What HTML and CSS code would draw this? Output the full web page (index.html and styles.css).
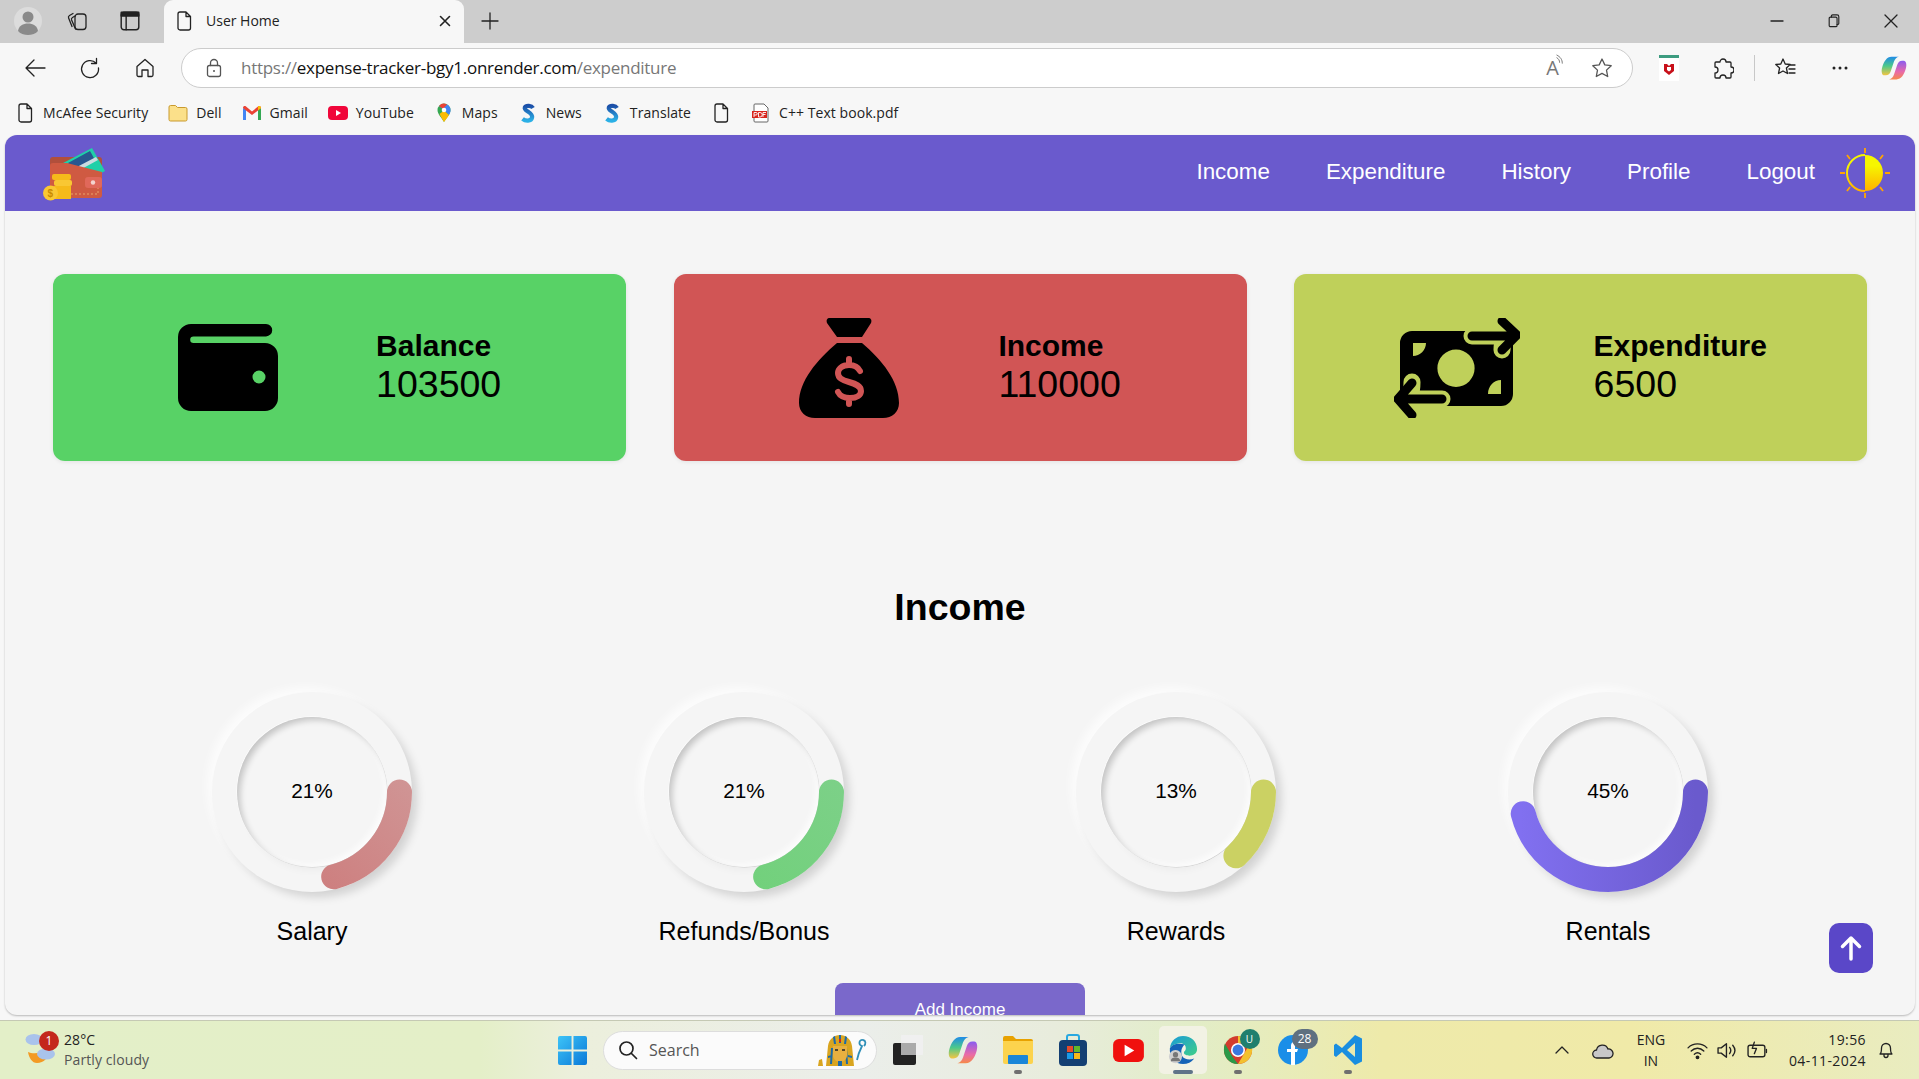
FILE: index.html
```html
<!DOCTYPE html>
<html lang="en">
<head>
<meta charset="utf-8">
<title>User Home</title>
<link rel="stylesheet" href="styles.css">
</head>
<body>
<svg class="defs" width="0" height="0" aria-hidden="true">
  <defs>
    <linearGradient id="cop1" x1="0" y1="0" x2="0" y2="1"><stop offset="0" stop-color="#1f8ae8"/><stop offset=".5" stop-color="#4cc98a"/><stop offset="1" stop-color="#f5c542"/></linearGradient>
    <linearGradient id="cop2" x1="0" y1="0" x2="0" y2="1"><stop offset="0" stop-color="#8a5cf0"/><stop offset=".6" stop-color="#e96aa8"/><stop offset="1" stop-color="#f58a4a"/></linearGradient>
    <linearGradient id="sgrad" x1="0" y1="0" x2="0" y2="1"><stop offset="0" stop-color="#1c4fa8"/><stop offset="1" stop-color="#2bb0e6"/></linearGradient>
    <symbol id="copilot" viewBox="0 0 32 32">
      <path d="M13 2h9c-3 .5-5 3-6 6l-4 12c-1 3-3 5-6 5H4C1 25 0 20 1.500 15 3.500 8 7 2 13 2z" fill="url(#cop1)"/>
      <path d="M19 30h-9c3-.5 5-3 6-6l4-12c1-3 3-5 6-5h2c3 0 4 5 2.500 10-2 7-5.500 13-11.500 13z" fill="url(#cop2)"/>
    </symbol>
    <symbol id="doc" viewBox="0 0 16 20">
      <path d="M2 3a2 2 0 0 1 2-2h6l4.500 4.500V17a2 2 0 0 1-2 2H4a2 2 0 0 1-2-2zM10 1v4.500h4.500"/>
    </symbol>
    <symbol id="bing" viewBox="0 0 16 22">
      <path d="M13.500 5.500C12 3 6 2 4.500 5c-1.500 4 9 5 8 11-1 4.500-7.500 4-10.500 1.500" fill="none" stroke="url(#sgrad)" stroke-width="4.600"/>
    </symbol>
  </defs>
</svg>
<div class="window">
  <header class="tabstrip">
    <div class="strip-left">
      <svg class="avatar" viewBox="0 0 28 28" width="28" height="28"><circle cx="14" cy="14" r="14" fill="#dcdcdc"/><circle cx="14" cy="10" r="5.500" fill="#8a8a8a"/><path d="M4 24c1-5.500 5-7.500 10-7.500s9 2 10 7.500c-2 2.500-6 4-10 4s-8-1.500-10-4z" fill="#8a8a8a"/></svg>
      <svg class="ico strip-ico" viewBox="0 0 22 22"><rect x="9" y="4" width="11" height="15.500" rx="3"/><path d="M9 6 6.500 7.500c-1 .6-1.300 1.600-.9 2.600L9.500 19M7 3.500 3.500 5.500c-1 .6-1.300 1.600-.9 2.600L6 16.500"/></svg>
      <svg class="ico strip-ico strip-ico-layout" viewBox="0 0 20 20"><rect x="2" y="2" width="16" height="16" rx="2.500"/><path d="M6.500 5.500V18"/><rect x="2" y="2" width="16" height="3.500" fill="#222"/></svg>
    </div>
    <div class="tab">
      <svg class="ico tab-doc"><use href="#doc"/></svg>
      <span class="tab-title">User Home</span>
      <svg class="ico tab-close" viewBox="0 0 12 12"><path d="M1.500 1.500l9 9M10.500 1.500l-9 9"/></svg>
    </div>
    <svg class="ico new-tab" viewBox="0 0 18 18"><path d="M9 1v16M1 9h16"/></svg>
    <div class="window-controls">
      <svg class="ico win-ico" viewBox="0 0 14 14"><path d="M1 7h12"/></svg>
      <svg class="ico win-ico" viewBox="0 0 14 16"><rect x="1.500" y="3.500" width="9" height="11" rx="1.500"/><path d="M4 3.500V2.500A1.500 1.500 0 0 1 5.500 1h5a2 2 0 0 1 2 2v7.500a1.500 1.500 0 0 1-1.500 1.500h-.5"/></svg>
      <svg class="ico win-ico" viewBox="0 0 14 14"><path d="M1 1l12 12M13 1L1 13"/></svg>
    </div>
  </header>

  <div class="toolbar">
    <div class="nav-btns">
      <svg class="ico tool-ico" viewBox="0 0 22 22"><path d="M21 11H2M10 3l-8 8 8 8"/></svg>
      <svg class="ico tool-ico" viewBox="0 0 22 22"><path d="M17.500 1.500v5h-5M17.200 6.200A8.500 8.500 0 1 0 19.500 11"/></svg>
      <svg class="ico tool-ico" viewBox="0 0 22 22"><path d="M3 9.500 11 2.500l8 7V18a1.500 1.500 0 0 1-1.500 1.500H14V13H8v6.500H4.500A1.500 1.500 0 0 1 3 18z"/></svg>
    </div>
    <div class="address">
      <svg class="ico lock" viewBox="0 0 16 20"><rect x="1.500" y="7.500" width="13" height="11" rx="2"/><path d="M4.500 7.500V5a3.500 3.500 0 0 1 7 0v2.500"/><circle cx="8" cy="13" r="1" fill="#555" stroke="none"/></svg>
      <span class="url"><span class="url-dim">https://</span>expense-tracker-bgy1.onrender.com<span class="url-dim">/expenditure</span></span>
      <span class="addr-right">
        <span class="read-aloud">A<svg class="ico wave" viewBox="0 0 10 14"><path d="M1 1c4 2 6 5 6 9M1 4c2 1 3 3 3 5"/></svg></span>
        <svg class="ico star" viewBox="0 0 22 22"><path d="M11 2l2.800 5.900 6.400.8-4.700 4.400 1.200 6.400L11 16.400l-5.700 3.100 1.200-6.400L1.800 8.700l6.400-.8z"/></svg>
      </span>
    </div>
    <div class="tool-right">
      <svg class="mcafee" viewBox="0 0 20 26" width="20" height="26"><rect width="20" height="26" fill="#fff"/><rect width="20" height="3" fill="#3d9c80"/><path d="M5 9h3l2 2 2-2h3v7l-5 4-5-4z" fill="#c8101a"/><path d="M8 12h4v3l-2 1.500L8 15z" fill="#fff"/></svg>
      <svg class="ico tool-ico" viewBox="0 0 22 22"><path d="M8 5a3 3 0 0 1 6 0h4a1 1 0 0 1 1 1v4a3 3 0 0 1 0 6v4a1 1 0 0 1-1 1h-4a3 3 0 0 0-6 0H4a1 1 0 0 1-1-1v-4a3 3 0 0 0 0-6V6a1 1 0 0 1 1-1z"/></svg>
      <span class="divider"></span>
      <svg class="ico tool-ico" viewBox="0 0 22 22"><path d="M9 2l2.200 5 5 .5-3.800 3.500 1.100 5.500L9 14l-4.500 2.500 1.100-5.500L1.800 7.500l5-.5zM15 8h6M15 12h6M15 16h6"/></svg>
      <svg class="more" viewBox="0 0 16 4" width="16" height="4"><circle cx="2" cy="2" r="1.500"/><circle cx="8" cy="2" r="1.500"/><circle cx="14" cy="2" r="1.500"/></svg>
      <svg class="copilot" width="26" height="26"><use href="#copilot"/></svg>
    </div>
  </div>

  <nav class="bookmarks">
    <span class="bm"><svg class="ico bm-ico"><use href="#doc"/></svg>McAfee Security</span>
    <span class="bm"><svg class="bm-ico" viewBox="0 0 20 18"><path d="M1 3a1.500 1.500 0 0 1 1.500-1.500h5l2 2h8A1.500 1.500 0 0 1 19 5v10.500a1.500 1.500 0 0 1-1.500 1.500h-15A1.500 1.500 0 0 1 1 15.500z" fill="#fbe08a" stroke="#c99a2e"/></svg>Dell</span>
    <span class="bm"><svg class="bm-ico" viewBox="0 0 20 16"><path d="M1 15V3l3 1.500V15z" fill="#4285f4"/><path d="M19 15V3l-3 1.500V15z" fill="#34a853"/><path d="M1 3c0-2 2-2.500 3-1.500L10 6.500l6-5c1-1 3-.5 3 1.500l-3 2.500-6 4.500-6-4.500z" fill="#ea4335"/><path d="M16 1.500c1-1 3-.5 3 1.500l-3 2.500z" fill="#fbbc04"/></svg>Gmail</span>
    <span class="bm"><svg class="bm-ico" viewBox="0 0 20 16"><rect width="20" height="14" y="1" rx="4" fill="#f0063a"/><path d="M8 5l5 3-5 3z" fill="#fff"/></svg>YouTube</span>
    <span class="bm"><svg class="bm-ico" viewBox="0 0 16 20"><path d="M8 19C5 14 1.500 11 1.500 7a6.500 6.500 0 0 1 13 0c0 4-3.500 7-6.500 12z" fill="#34a853"/><path d="M3 3l10 9c1-1.500 1.500-3.500 1.500-5A6.500 6.500 0 0 0 11 1.500z" fill="#4285f4"/><path d="M3 3a6.500 6.500 0 0 1 8-1.500L7 6z" fill="#ea4335"/><path d="M8 19c2-3 4-5 5-7L8 7.500 3.500 11C5 14 6.500 16.500 8 19z" fill="#fbbc04"/><circle cx="8" cy="7" r="2.300" fill="#fff"/></svg>Maps</span>
    <span class="bm"><svg class="bm-ico"><use href="#bing"/></svg>News</span>
    <span class="bm"><svg class="bm-ico"><use href="#bing"/></svg>Translate</span>
    <span class="bm"><svg class="ico bm-ico"><use href="#doc"/></svg></span>
    <span class="bm"><svg class="bm-ico" viewBox="0 0 18 20"><path d="M3 1h9l4 4v13a1 1 0 0 1-1 1H3a1 1 0 0 1-1-1V2a1 1 0 0 1 1-1z" fill="#fff" stroke="#666"/><rect x="0" y="8" width="15" height="7" fill="#d8241c"/><path d="M2 14V9.500h2a1 1 0 0 1 0 2.500H2M6.500 9.500v4.500h1.500a2 2 0 0 0 0-4.500zM11 14V9.500h3M11 11.500h2.500" stroke="#fff" stroke-width=".9" fill="none"/></svg>C++ Text book.pdf</span>
  </nav>

  <main class="viewport">
    <div class="topbar">
      <svg class="logo" viewBox="0 0 62 55" width="62" height="55">
        <rect x="7" y="11" width="52" height="20" rx="3" fill="#b14f3b"/>
        <path d="M20 17 49 2l13 23-18 10z" fill="#1fd0a8"/>
        <path d="M25 17 47 5l5 9-22 12z" fill="#28578f"/>
        <path d="M32 22 53 11l2 3-20 11z" fill="#c9dce0"/>
        <path d="M10 17h14l35 9v23a3 3 0 0 1-3 3H10a3 3 0 0 1-3-3V20a3 3 0 0 1 3-3z" fill="#cf5a42"/>
        <path d="M55 41v7H28" fill="none" stroke="#eaa46a" stroke-width="1" stroke-dasharray="2 2"/>
        <rect x="42" y="31" width="17" height="11" rx="3" fill="#e0685a"/>
        <circle cx="50" cy="36.500" r="2.200" fill="#f4d3ce"/>
        <rect x="9" y="28" width="19" height="6" rx="2" fill="#f6ba1a"/>
        <rect x="11" y="34" width="18" height="6" rx="2" fill="#f9c733"/>
        <rect x="11" y="40" width="17" height="13" fill="#f6ba1a"/>
        <circle cx="7.500" cy="47" r="7.500" fill="#f9c733"/>
        <text class="logo-dollar" x="4.500" y="51">$</text>
      </svg>
      <div class="nav-links">
        <a class="nav-link">Income</a>
        <a class="nav-link">Expenditure</a>
        <a class="nav-link">History</a>
        <a class="nav-link">Profile</a>
        <a class="nav-link">Logout</a>
        <svg class="sun" viewBox="0 0 52 52" width="52" height="52">
          <defs><linearGradient id="sunfill" x1="0" y1="0" x2="0" y2="1"><stop offset=".3" stop-color="#f6f600"/><stop offset="1" stop-color="#ffb000"/></linearGradient></defs>
          <path d="M26 8a18 18 0 0 1 0 36z" fill="url(#sunfill)"/>
          <path d="M26 8a18 18 0 0 0 0 36" fill="#6a5acd" stroke="url(#sunfill)" stroke-width="2"/>
          <path d="M26 1v5M26 46v5M1 26h5M46 26h5M8 8l3 4M44 8l-3 4M8 44l3-4M44 44l-3-4" stroke="#ffa500" stroke-width="1.800" fill="none"/>
        </svg>
      </div>
    </div>

    <section class="cards">
      <article class="card card-green">
        <svg viewBox="0 0 100 87" width="100" height="87"><path d="M13 0h75a6.200 6.200 0 0 1 0 12.400H15.500a3.300 3.300 0 0 0 0 6.600H87a13 13 0 0 1 13 13v42a13 13 0 0 1-13 13H13A13 13 0 0 1 0 74V13A13 13 0 0 1 13 0zm68 46.500a6.500 6.500 0 1 0 0 13 6.500 6.500 0 0 0 0-13z" fill-rule="evenodd"/></svg>
        <div class="card-text"><h3 class="card-title">Balance</h3><p class="card-value">103500</p></div>
      </article>
      <article class="card card-red">
        <svg viewBox="0 0 100 100" width="100" height="100"><path d="M31 0h38c3 0 4 2 3 5L63 19H38L28 5c-1-3 0-5 3-5zM38 25h25c20 17 37 38 37 60 0 9-7 15-16 15H16C7 100 0 94 0 85c0-22 18-43 38-60z"/><path class="bag-dollar" d="M50 41v6M50 80v6M61 53c-2-4-6-6-11-6-7 0-11 4-11 8 0 5 4 7 11 9 7 2 12 4 12 9 0 4-4 7-11 7-6 0-10-2-12-6"/></svg>
        <div class="card-text"><h3 class="card-title">Income</h3><p class="card-value">110000</p></div>
      </article>
      <article class="card card-olive">
        <svg viewBox="0 0 126 100" width="126" height="100"><path d="M18 13h89a12 12 0 0 1 12 12v51a12 12 0 0 1-12 12H18A12 12 0 0 1 6 76V25a12 12 0 0 1 12-12zm44 18.500a18.600 18.700 0 1 0 0 37.400 18.600 18.700 0 0 0 0-37.400zM19 25v13c7 0 13-6 13-13zm88 51V62c-7 0-13 6-13 14z" fill-rule="evenodd"/><path class="exch-halo" d="M78 18h44M115 18c-3 0-7 4-7 14M48 81H8M12 80c3 0 6-5 6-16"/><path class="exch-arrow" d="M78 18h44M108 3l15 14-15 15M48 81H6M18 65 4 81l14 16"/></svg>
        <div class="card-text"><h3 class="card-title">Expenditure</h3><p class="card-value">6500</p></div>
      </article>
    </section>

    <h2 class="section-title">Income</h2>

    <section class="rings">
      <figure class="ring-item">
        <div class="ring">
          <div class="ring-inner"><span class="ring-pct">21%</span></div>
          <svg class="ring-svg" viewBox="0 0 200 200" width="200" height="200">
            <defs><linearGradient id="g1" x1="1" y1="0" x2="0" y2="1"><stop offset="0" stop-color="#d19c9c"/><stop offset="1" stop-color="#cc7575"/></linearGradient></defs>
            <circle class="ring-arc" cx="100" cy="100" r="87.500" stroke="url(#g1)" pathLength="100" stroke-dasharray="21 100"/>
          </svg>
        </div>
        <figcaption class="ring-label">Salary</figcaption>
      </figure>
      <figure class="ring-item">
        <div class="ring">
          <div class="ring-inner"><span class="ring-pct">21%</span></div>
          <svg class="ring-svg" viewBox="0 0 200 200" width="200" height="200">
            <defs><linearGradient id="g2" x1="1" y1="0" x2="0" y2="1"><stop offset="0" stop-color="#80d08c"/><stop offset="1" stop-color="#6dd176"/></linearGradient></defs>
            <circle class="ring-arc" cx="100" cy="100" r="87.500" stroke="url(#g2)" pathLength="100" stroke-dasharray="21 100"/>
          </svg>
        </div>
        <figcaption class="ring-label">Refunds/Bonus</figcaption>
      </figure>
      <figure class="ring-item">
        <div class="ring">
          <div class="ring-inner"><span class="ring-pct">13%</span></div>
          <svg class="ring-svg" viewBox="0 0 200 200" width="200" height="200">
            <circle class="ring-arc ring-arc-olive" cx="100" cy="100" r="87.500" pathLength="100" stroke-dasharray="13 100"/>
          </svg>
        </div>
        <figcaption class="ring-label">Rewards</figcaption>
      </figure>
      <figure class="ring-item">
        <div class="ring">
          <div class="ring-inner"><span class="ring-pct">45%</span></div>
          <svg class="ring-svg" viewBox="0 0 200 200" width="200" height="200">
            <defs><linearGradient id="g4" x1="1" y1="0" x2="0" y2="0"><stop offset="0" stop-color="#6a5acd"/><stop offset="1" stop-color="#8170f0"/></linearGradient></defs>
            <circle class="ring-arc" cx="100" cy="100" r="87.500" stroke="url(#g4)" pathLength="100" stroke-dasharray="46 100"/>
          </svg>
        </div>
        <figcaption class="ring-label">Rentals</figcaption>
      </figure>
    </section>

    <div class="add-row"><button class="add-btn">Add Income</button></div>

    <button class="to-top" aria-label="Back to top">
      <svg viewBox="0 0 22 26" width="22" height="26"><path d="M11 24V3M2.500 11.500 11 3l8.500 8.500" fill="none" stroke="#fff" stroke-width="3.500" stroke-linecap="round" stroke-linejoin="round"/></svg>
    </button>
  </main>

  <footer class="taskbar">
    <div class="weather">
      <span class="weather-ico">
        <svg viewBox="0 0 32 32" width="32" height="32"><path d="M3 18c4 2 12 2 20-2 1 8-4 13-11 13-5 0-8-5-9-11z" fill="#f39a24"/><ellipse cx="9" cy="5.500" rx="8.500" ry="5.500" fill="#a9c3ec"/><ellipse cx="21" cy="20" rx="9" ry="5.500" fill="#a9c3ec"/></svg>
        <span class="weather-badge">1</span>
      </span>
      <div class="weather-text"><span class="temp">28°C</span><span class="cond">Partly cloudy</span></div>
    </div>
    <div class="task-center">
      <svg class="win-logo" viewBox="0 0 30 30" width="29" height="29"><defs><linearGradient id="win" x1="0" y1="0" x2="1" y2="1"><stop offset="0" stop-color="#3dc4f7"/><stop offset="1" stop-color="#0a78d8"/></linearGradient></defs><path d="M0 2a2 2 0 0 1 2-2h12v14H0zM16 0h12a2 2 0 0 1 2 2v12H16zM0 16h14v14H2a2 2 0 0 1-2-2zM16 16h14v12a2 2 0 0 1-2 2H16z" fill="url(#win)"/></svg>
      <div class="search">
        <svg class="ico search-ico" viewBox="0 0 20 20"><circle cx="8.500" cy="8.500" r="6.500"/><path d="M13.500 13.500 18.500 18.500"/></svg>
        <span class="search-text">Search</span>
        <svg class="pharaoh" viewBox="0 0 50 32" width="50" height="32"><path d="M0 32l1-6 3-1 1 7zM8 32l2-20C11 5 16 1 22 1s11 4 12 11l2 20z" fill="#d9a520"/><path d="M12 30l1-16h2l-1 16zM30 30l-1-16h-2l1 16zM10 22l4-1v2l-4 1zM34 22l-4-1v2l4 1zM17 2l1 8h-2l-1-7zM27 2l-1 8h2l1-7zM21 1h2v8h-2z" fill="#1d6aa8"/><path d="M15 12h14v9c0 4-3 7-7 7s-7-3-7-7z" fill="#e8b040"/><path d="M17 16h3M24 16h3" stroke="#222" stroke-width="1.500"/><path d="M20 27h4v5h-4z" fill="#1d6aa8"/><path d="M21 5h2v3h-2z" fill="#d8241c"/><path d="M39 26c1-5 3-10 5-14-4-1-3-7 1-6 3 .5 3 4 1 6" fill="none" stroke="#2f8fb8" stroke-width="1.800"/></svg>
      </div>
      <span class="task-app"><svg viewBox="0 0 30 30" width="30" height="30"><rect x="8" y="0" width="22" height="20" rx="1" fill="#f0f0f0"/><rect x="0" y="8" width="23" height="22" rx="2" fill="#222"/><rect x="8" y="8" width="15" height="12" fill="#aaa"/></svg></span>
      <span class="task-app"><svg width="30" height="30"><use href="#copilot"/></svg></span>
      <span class="task-app has-dot"><svg viewBox="0 0 30 28" width="30" height="28"><path d="M0 2a2 2 0 0 1 2-2h8l3 3h15a2 2 0 0 1 2 2v4H0z" fill="#e8a200"/><path d="M0 5h30v21a2 2 0 0 1-2 2H2a2 2 0 0 1-2-2z" fill="#fcd34d"/><rect x="5" y="19" width="20" height="9" rx="1" fill="#1a86d8"/></svg></span>
      <span class="task-app"><svg viewBox="0 0 30 32" width="30" height="32"><path d="M9 6V3a2 2 0 0 1 2-2h8a2 2 0 0 1 2 2v3" fill="none" stroke="#28a8e0" stroke-width="2"/><rect x="1" y="6" width="28" height="26" rx="4" fill="#143f73"/><rect x="9" y="12" width="6" height="6" fill="#e84a2a"/><rect x="16" y="12" width="6" height="6" fill="#62b82a"/><rect x="9" y="19" width="6" height="6" fill="#1a9ae8"/><rect x="16" y="19" width="6" height="6" fill="#f8b818"/></svg></span>
      <span class="task-app"><svg viewBox="0 0 32 26" width="31" height="25"><rect width="32" height="24" y="1" rx="6" fill="#f0100e"/><path d="M12 7l10 6-10 6z" fill="#fff"/></svg></span>
      <span class="task-app task-active has-bar"><svg viewBox="0 0 32 32" width="30" height="30"><defs><linearGradient id="edge" x1="0" y1="0" x2="1" y2="1"><stop offset="0" stop-color="#1a9ad8"/><stop offset="1" stop-color="#3fcf88"/></linearGradient></defs><path d="M2 14C3 6 9 1 16 1c9 0 15 6 15 14 0 5-4 7-8 7-3 0-6-1-6-3 0-2 2-2 2-5 0-4-4-6-8-5C6 10 3 12 2 14z" fill="url(#edge)"/><path d="M2 14c-1 9 6 17 14 17 5 0 9-2 12-6-5 2-11 1-13-3-2-5 0-10 3-12C10 8 4 10 2 14z" fill="#1563b8"/><circle cx="8" cy="23" r="7" fill="#d0d0d0"/><circle cx="8" cy="21" r="2.800" fill="#777"/><path d="M3 28c0-3 2-4 5-4s5 1 5 4z" fill="#777"/></svg></span>
      <span class="task-app has-dot">
        <svg viewBox="0 0 32 32" width="30" height="30"><circle cx="16" cy="16" r="15" fill="#d23c2e"/><path d="M16 1a15 15 0 0 1 13 7.500H16z" fill="#f3c02e"/><path d="M2 9l8 14 6 8C7 31 1 24 1 16c0-3 .5-5 1-7z" fill="#2a9a48"/><path d="M29 8.500A15 15 0 0 1 16 31l7-12z" fill="#f3c02e"/><circle cx="16" cy="16" r="7.500" fill="#fff"/><circle cx="16" cy="16" r="5.800" fill="#3a78e0"/></svg>
        <span class="app-badge app-badge-green">U</span>
      </span>
      <span class="task-app">
        <svg viewBox="0 0 30 30" width="30" height="30"><circle cx="15" cy="15" r="15" fill="#1a8ee8"/><path d="M13 30V17H9v-3h4v-3c0-3 2-5 5-5h2v3h-1c-1 0-2 1-2 2v3h3l-1 3h-2v13z" fill="#fff"/></svg>
        <span class="app-badge app-badge-gray">28</span>
      </span>
      <span class="task-app has-dot"><svg viewBox="0 0 30 32" width="30" height="32"><path d="M22 1l7 3.500v23L22 31 9 18 3 23l-2-1.500V11L3 9.500 9 14zM22 9l-8 7 8 7z" fill="#1a8ee0" fill-rule="evenodd"/></svg></span>
    </div>
    <div class="tray">
      <svg class="ico tray-chev" viewBox="0 0 14 8"><path d="M1 7l6-6 6 6"/></svg>
      <svg class="tray-cloud" viewBox="0 0 22 18" width="22" height="18"><path d="M5 17a4 4 0 0 1-.5-8A6 6 0 0 1 16 8a4.500 4.500 0 0 1 1 9z" fill="#c8c8c8" stroke="#222" stroke-width="1.300"/></svg>
      <div class="lang"><span>ENG</span><span>IN</span></div>
      <div class="tray-icons">
        <svg class="ico tray-ico" viewBox="0 0 20 18"><path d="M1 6.500c5-5 13-5 18 0M4 9.500c3.500-3.500 8.500-3.500 12 0M7 12.500c2-1.800 4-1.800 6 0"/><circle cx="10" cy="15.500" r="1.200" fill="#222"/></svg>
        <svg class="ico tray-ico" viewBox="0 0 20 18"><path d="M1 6.500h3l5-4v13l-5-4H1zM12 6c1.500 2 1.500 4 0 6M15 4c2.500 3 2.500 7 0 10"/></svg>
        <svg class="ico tray-ico" viewBox="0 0 20 18"><rect x="1" y="4" width="16" height="11" rx="2"/><path d="M18.500 8v3M7 1 5 7h4l-2 5"/></svg>
      </div>
      <div class="clock"><span>19:56</span><span>04-11-2024</span></div>
      <svg class="ico bell" viewBox="0 0 16 20"><path d="M2 14c1.500-1 1.500-3 1.500-6a4.500 4.500 0 0 1 9 0c0 3 0 5 1.500 6zM6 14.500v1a2 2 0 0 0 4 0v-1"/></svg>
    </div>
  </footer>
</div>
</body>
</html>
```

FILE: styles.css
```css
* { box-sizing: border-box; }
html, body { margin: 0; height: 100%; overflow: hidden; }
body { font-family: "Liberation Sans", Arial, sans-serif; color: #000; }
.defs { position: absolute; }
.window { width: 1919px; height: 1079px; display: flex; flex-direction: column; background: #f7f7f7; overflow: hidden; }
.ico { fill: none; stroke: #222; stroke-width: 1.3; stroke-linecap: round; stroke-linejoin: round; }

/* Tab strip */
.tabstrip { height: 43px; flex: none; background: #cdcdcd; display: flex; align-items: center; }
.strip-left { display: flex; align-items: center; gap: 24px; width: 164px; padding: 0 0 1px 14px; }
.avatar { display: block; }
.strip-ico { width: 22px; height: 22px; }
.strip-ico-layout { margin-left: 7px; }
.tab { width: 300px; height: 43px; background: #f7f7f7; border-radius: 9px 9px 0 0; display: flex; align-items: center; padding: 0 13px 2px 12px; }
.tab-doc { width: 16px; height: 20px; }
.tab-title { font: 14px "Open Sans", sans-serif; margin-left: 14px; flex: 1; color: #222; }
.tab-close { width: 12px; height: 12px; stroke-width: 1.600; }
.new-tab { width: 18px; height: 18px; margin: 0 0 2px 17px; }
.window-controls { margin-left: auto; display: flex; gap: 43px; padding: 0 21px 2px 0; align-items: center; }
.win-ico { width: 14px; height: 14px; }

/* Toolbar */
.toolbar { height: 49px; flex: none; display: flex; align-items: center; }
.nav-btns { display: flex; gap: 33px; width: 181px; padding-left: 24px; }
.tool-ico { width: 22px; height: 22px; }
.address { width: 1452px; height: 40px; background: #fff; border: 1px solid #ccc; border-radius: 20px; display: flex; align-items: center; padding: 0 19px 0 24px; }
.lock { width: 16px; height: 20px; stroke: #555; }
.url { font: 17px "Open Sans", sans-serif; letter-spacing: -.27px; margin-left: 19px; color: #111; }
.url-dim { color: #777; }
.addr-right { margin-left: auto; display: flex; align-items: center; gap: 26px; }
.read-aloud { font: 20px "Open Sans", sans-serif; color: #777; display: flex; align-items: flex-start; }
.wave { width: 9px; height: 13px; stroke: #777; stroke-width: 1.100; margin-left: -3px; }
.star { width: 22px; height: 22px; stroke: #555; }
.tool-right { display: flex; align-items: center; flex: 1; padding-left: 26px; gap: 33px; }
.mcafee { display: block; }
.divider { width: 1px; height: 26px; background: #c8c8c8; margin: 0 -13.500px; }
.more { fill: #222; margin-left: 3px; }

/* Bookmarks */
.bookmarks { height: 43px; flex: none; display: flex; align-items: center; padding: 0 0 2px 15px; gap: 20px; font: 14px "Open Sans", sans-serif; color: #222; }
.bm { display: flex; align-items: center; gap: 8px; letter-spacing: .06px; }
.bm-ico { width: 20px; height: 20px; flex: none; }

/* Page viewport */
.viewport { position: relative; height: 880px; flex: none; margin: 0 4px 0 5px; background: #f5f5f5; border-radius: 12px; box-shadow: 0 1px 2px rgba(0,0,0,.25); overflow: hidden; }
.topbar { height: 76px; background: #6a5acd; display: flex; align-items: center; justify-content: space-between; padding: 0 24px 0 38px; }
.logo { display: block; }
.logo-dollar { font: bold 10px "Liberation Sans", sans-serif; fill: #c98a00; }
.nav-links { display: flex; align-items: center; gap: 56px; }
.nav-link { color: #fff; font-size: 22.400px; padding-bottom: 2px; }
.sun { margin-left: -32px; }

.cards { display: grid; grid-template-columns: repeat(3, 573px); justify-content: space-between; padding: 63px 48px 0; }
.card { height: 187px; border-radius: 12px; display: flex; align-items: center; justify-content: space-evenly; padding: 0 26.500px; box-shadow: 0 1px 4px rgba(0,0,0,.08); }
.card-green { background: #58d266; }
.card-red { background: #d15555; }
.card-olive { background: #bfd05a; }
.card-text { margin-top: -2px; }
.card-title { margin: 0; font-size: 30px; font-weight: 700; line-height: 34px; }
.card-value { margin: 0; font-size: 37.500px; line-height: 42px; }
.bag-dollar { fill: none; stroke: #d15555; stroke-width: 6; stroke-linecap: round; }
.exch-halo { fill: none; stroke: #bfd05a; stroke-width: 17; stroke-linecap: round; }
.exch-arrow { fill: none; stroke: #000; stroke-width: 9; stroke-linecap: round; stroke-linejoin: round; }

.section-title { margin: 121px 0 0; font-size: 37.500px; font-weight: 700; text-align: center; line-height: 50px; }

.rings { display: grid; grid-template-columns: repeat(4, 432px); justify-content: center; margin-top: 60px; }
.ring-item { margin: 0; display: flex; flex-direction: column; align-items: center; }
.ring { position: relative; width: 200px; height: 200px; border-radius: 50%; box-shadow: 6px 6px 10px -1px rgba(0,0,0,.15), -6px -6px 10px -1px rgba(255,255,255,.7); display: flex; align-items: center; justify-content: center; }
.ring-inner { width: 150px; height: 150px; border-radius: 50%; display: flex; align-items: center; justify-content: center; padding-bottom: 2px; box-shadow: inset 4px 4px 6px -1px rgba(0,0,0,.2), inset -4px -4px 6px -1px rgba(255,255,255,.7), -.5px -.5px 0 #fff, .5px .5px 0 rgba(0,0,0,.15), 0 12px 10px -10px rgba(0,0,0,.05); }
.ring-pct { font-size: 20.800px; }
.ring-svg { position: absolute; left: 0; top: 0; }
.ring-arc { fill: none; stroke-width: 25; stroke-linecap: round; }
.ring-arc-olive { stroke: #cbd163; }
.ring-label { font-size: 25px; margin-top: 25px; line-height: 28px; }

.add-row { display: flex; justify-content: center; margin-top: 38px; }
.add-btn { width: 250px; height: 54px; border: 0; border-radius: 8px; background: #7a68cb; color: #fff; font: 17px "Liberation Sans", sans-serif; }
.to-top { position: absolute; right: 42px; top: 788px; width: 44px; height: 50px; border: 0; border-radius: 10px; background: #5a47c8; display: flex; align-items: center; justify-content: center; padding: 0; }

/* Taskbar */
.taskbar { flex: 1; display: flex; align-items: center; margin-top: 5px; border-top: 1px solid #c5c9b4; background: linear-gradient(90deg, #e3efc8 0%, #e4efc8 25%, #ecefdc 30%, #ebeeea 45%, #e8ecdc 55%, #e2edc8 62%, #eeeaaa 72%, #f0eaa8 85%, #e9ecc0 100%); }
.weather { width: 558px; flex: none; padding-left: 25px; display: flex; align-items: center; font: 14px "Open Sans", sans-serif; color: #222; }
.weather-ico { position: relative; width: 39px; height: 32px; display: block; }
.weather-badge { position: absolute; left: 14px; top: -3px; width: 20px; height: 20px; border-radius: 50%; background: #c4271c; color: #fff; font-size: 12px; text-align: center; line-height: 20px; }
.weather-text { display: flex; flex-direction: column; line-height: 20px; letter-spacing: .1px; }
.cond { color: #555; }
.task-center { display: flex; align-items: center; }
.search { width: 274px; height: 39px; margin: 0 3.500px 0 16px; background: #fbfbfb; border: 1px solid #ddd; border-radius: 20px; display: flex; align-items: center; padding: 0 8px 0 14px; }
.search-ico { width: 20px; height: 20px; stroke-width: 1.700; }
.search-text { font: 16px "Open Sans", sans-serif; color: #555; margin-left: 11px; flex: 1; }
.task-app { position: relative; width: 55px; height: 48px; flex: none; display: flex; align-items: center; justify-content: center; }
.task-active { width: 48px; margin: 0 3.500px; background: #f2f2e4; border-radius: 5px; }
.has-dot::after, .has-bar::after { content: ""; position: absolute; bottom: 0; left: 50%; transform: translateX(-50%); background: #6f6f6f; height: 4px; border-radius: 2px; width: 8px; }
.has-bar::after { width: 20px; background: #5f7488; }
.app-badge { position: absolute; right: 6px; top: 3px; min-width: 20px; height: 20px; border-radius: 10px; color: #fff; font: 12px "Open Sans", sans-serif; text-align: center; line-height: 20px; }
.app-badge-green { background: #1f7f6e; font-size: 10px; }
.app-badge-gray { right: 3px; min-width: 26px; background: #5f7080; }
.tray { margin-left: auto; display: flex; align-items: center; padding-right: 25px; font: 14px "Open Sans", sans-serif; color: #222; }
.tray-chev { width: 14px; height: 8px; }
.tray-cloud { margin-left: 23px; }
.lang { display: flex; flex-direction: column; align-items: center; width: 30px; margin-left: 22px; line-height: 21px; }
.tray-icons { display: flex; gap: 9px; margin-left: 21px; }
.tray-ico { width: 21px; height: 19px; }
.clock { display: flex; flex-direction: column; align-items: flex-end; margin-left: 21px; line-height: 21px; letter-spacing: .4px; }
.bell { width: 16px; height: 20px; margin-left: 12px; }
```
